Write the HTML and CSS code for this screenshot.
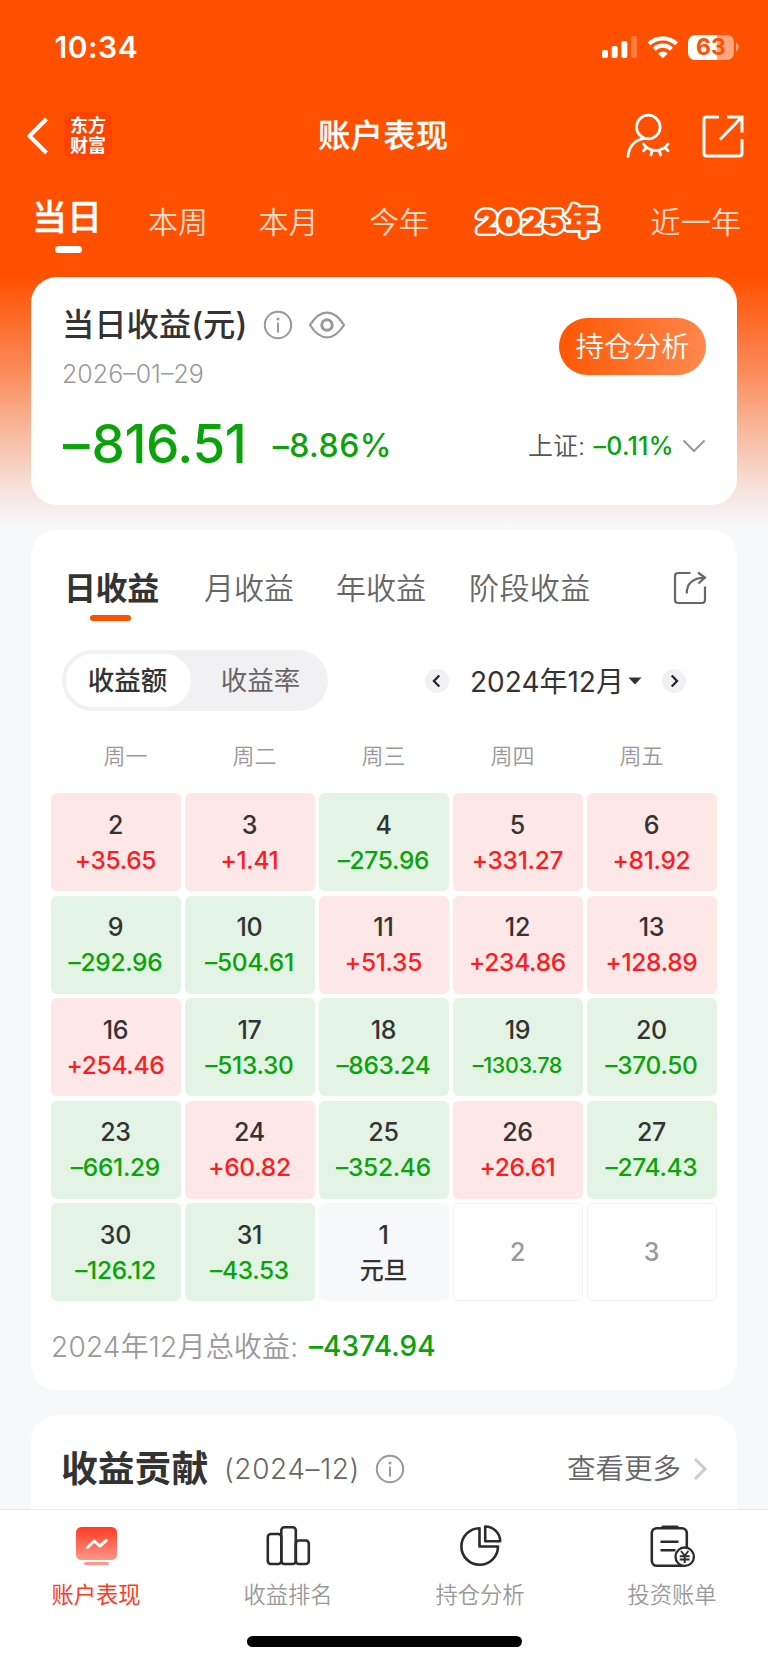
FILE: index.html
```html
<!DOCTYPE html>
<html lang="zh-CN">
<head>
<meta charset="utf-8">
<title>账户表现</title>
<link rel="stylesheet" href="styles.css">
</head>
<body>
<div class="screen">
  <header class="hero">
    <div class="status">
      <span class="clock">10:34</span>
      <div class="status-icons">
        <svg class="signal" width="36" height="24" viewBox="0 0 36 24" fill="#fff"><rect x="0" y="15" width="6" height="8" rx="2"/><rect x="9.7" y="11" width="6" height="12" rx="2"/><rect x="19.3" y="6" width="6" height="17" rx="2"/><rect x="29" y="1" width="6" height="22" rx="2" opacity=".25"/></svg>
        <svg class="wifi" width="32" height="24" viewBox="0 0 32 24" fill="none" stroke="#fff" stroke-width="4.2"><path d="M2 8.8a20 20 0 0 1 27.6 0"/><path d="M7.1 14.2a12.6 12.6 0 0 1 17.4 0"/><path d="M15.8 23.2 10.9 18.4a7.4 7.4 0 0 1 9.8 0z" fill="#fff" stroke="none"/></svg>
        <div class="battery"><span>63</span></div>
        <svg class="nub" width="4" height="10" viewBox="0 0 4 10"><path d="M0 0.5a5.2 5.2 0 0 1 0 9z" fill="#fff" opacity=".5"/></svg>
      </div>
    </div>
    <div class="nav">
      <svg class="back" width="22" height="38" viewBox="0 0 22 38" fill="none" stroke="#fff" stroke-width="4"><path d="M19.5 2 2.5 19l17 17" stroke-linejoin="round"/></svg>
      <div class="logo"><span>东方</span><span>财富</span></div>
      <h1>账户表现</h1>
      <svg class="user" width="44" height="46" viewBox="0 0 44 46" fill="none" stroke="#fff" stroke-width="2.8" stroke-linecap="round"><circle cx="22.3" cy="14" r="11.8"/><path d="M2 43.5C3 31.5 11 25 22.3 25.500"/><path d="M17.5 31c6 8.500 18.500 8.500 24.500 0M20.500 34.500l-3 3.300M26.200 37.500l-1.300 4.500M33.300 37.500l1.300 4.500M39 34.500l3 3.300"/></svg>
      <svg class="export" width="42" height="42" viewBox="0 0 42 42" fill="none" stroke="#fff" stroke-width="3"><path d="M17 2H4.500Q2 2 2 4.500v34Q2 41 4.500 41h33q2.500 0 2.500-2.500V24"/><path d="M25 2h15v15.500M39.500 2.500 18 24.500"/></svg>
    </div>
    <nav class="periods">
      <span class="p1">当日</span><span class="p2">本周</span><span class="p3">本月</span><span class="p4">今年</span><span class="p5">2025<b>年</b></span><span class="p6">近一年</span>
    </nav>
  </header>

  <main>
    <section class="card today">
      <div class="today-main">
        <div class="today-title"><h2>当日收益(元)</h2>
          <svg class="info" width="30" height="30" viewBox="0 0 30 30" fill="none" stroke="#999" stroke-width="2"><circle cx="15" cy="15" r="13.200"/><path d="M15 12.800v9.700"/><circle cx="15" cy="8.900" r="1.500" fill="#999" stroke="none"/></svg>
          <svg class="eye" width="38" height="28" viewBox="0 0 38 28" fill="none" stroke="#999" stroke-width="2.200"><path d="M2 14C7 6 12.500 1.600 19 1.600S31 6 36 14C31 22 25.500 26.400 19 26.400S7 22 2 14z" stroke-linejoin="round"/><circle cx="19" cy="14" r="5.200" stroke-width="3"/></svg>
        </div>
        <div class="date">2026–01–29</div>
      </div>
      <div class="pill-btn">持仓分析</div>
      <div class="figures">
        <span class="big"><i>–</i>816.51</span><span class="pct">–8.86%</span>
        <span class="index-name">上证:</span><span class="index-pct">–0.11%</span>
        <svg class="chev" width="24" height="14" viewBox="0 0 24 14" fill="none" stroke="#999" stroke-width="2"><path d="m1.500 1.500 10.500 10.500 10.500-10.500"/></svg>
      </div>
    </section>

    <section class="card calendar">
      <div class="cal-tabs">
        <span class="t1">日收益</span><span class="t2">月收益</span><span class="t3">年收益</span><span class="t4">阶段收益</span>
        <svg class="share" width="34" height="34" viewBox="0 0 34 34" fill="none" stroke="#666" stroke-width="2.200"><path d="M17.500 2H5Q2 2 2 5v24q0 3 3 3h24q3 0 3-3V15.500"/><path d="M13.700 22.500C13.700 12 20 7 32 6.500M25 1.500l7 5-6.500 6"/></svg>
      </div>
      <div class="cal-controls">
        <div class="segment"><span class="on">收益额</span><span class="off">收益率</span></div>
        <div class="round prev"><svg width="24" height="24" viewBox="0 0 24 24" fill="none" stroke="#222" stroke-width="2.200"><path d="m14.300 6.500-5.400 5.500 5.400 5.500"/></svg></div>
        <span class="month">2024年12月</span>
        <svg class="caret" width="14" height="8" viewBox="0 0 14 8"><path d="M.5.500h13L8 6.500q-1 1-2 0z" fill="#333"/></svg>
        <div class="round next"><svg width="24" height="24" viewBox="0 0 24 24" fill="none" stroke="#222" stroke-width="2.200"><path d="m9.700 6.500 5.400 5.500-5.400 5.500"/></svg></div>
      </div>
      <div class="weekdays"><span>周一</span><span>周二</span><span>周三</span><span>周四</span><span>周五</span></div>
      <div class="grid">
        <div class="cell up"><i>2</i><b>+35.65</b></div><div class="cell up"><i>3</i><b>+1.41</b></div><div class="cell down"><i>4</i><b>–275.96</b></div><div class="cell up"><i>5</i><b>+331.27</b></div><div class="cell up"><i>6</i><b>+81.92</b></div>
        <div class="cell down"><i>9</i><b>–292.96</b></div><div class="cell down"><i>10</i><b>–504.61</b></div><div class="cell up"><i>11</i><b>+51.35</b></div><div class="cell up"><i>12</i><b>+234.86</b></div><div class="cell up"><i>13</i><b>+128.89</b></div>
        <div class="cell up"><i>16</i><b>+254.46</b></div><div class="cell down"><i>17</i><b>–513.30</b></div><div class="cell down"><i>18</i><b>–863.24</b></div><div class="cell down long"><i>19</i><b>–1303.78</b></div><div class="cell down"><i>20</i><b>–370.50</b></div>
        <div class="cell down"><i>23</i><b>–661.29</b></div><div class="cell up"><i>24</i><b>+60.82</b></div><div class="cell down"><i>25</i><b>–352.46</b></div><div class="cell up"><i>26</i><b>+26.61</b></div><div class="cell down"><i>27</i><b>–274.43</b></div>
        <div class="cell down"><i>30</i><b>–126.12</b></div><div class="cell down"><i>31</i><b>–43.53</b></div><div class="cell holiday"><i>1</i><b>元旦</b></div><div class="cell empty"><i>2</i></div><div class="cell empty"><i>3</i></div>
      </div>
      <div class="total"><span class="total-label">2024年12月总收益:</span><span class="total-value">–4374.94</span></div>
    </section>

    <section class="card contrib">
      <h2>收益贡献</h2><span class="range">(2024–12)</span>
      <svg class="info" width="30" height="30" viewBox="0 0 30 30" fill="none" stroke="#999" stroke-width="2"><circle cx="15" cy="15" r="13.200"/><path d="M15 12.800v9.700"/><circle cx="15" cy="8.900" r="1.500" fill="#999" stroke="none"/></svg>
      <span class="more">查看更多</span>
      <svg class="more-chev" width="16" height="24" viewBox="0 0 16 24" fill="none" stroke="#ccc" stroke-width="3"><path d="m3 2 10 10L3 22"/></svg>
    </section>
  </main>

  <footer class="tabbar">
    <div class="tabs">
      <div class="tab active">
        <svg width="48" height="48" viewBox="0 0 48 48"><defs><linearGradient id="g" x1="0" y1="0" x2="0" y2="1"><stop offset="0" stop-color="#ff3b24"/><stop offset="1" stop-color="#ff9688"/></linearGradient></defs><rect x="4" y="5" width="41" height="33" rx="5.500" fill="url(#g)"/><path d="m15.500 25.500 6.800-6.500 5.400 5 6.600-5.500" fill="none" stroke="#fff" stroke-width="3" stroke-linecap="round" stroke-linejoin="round"/><rect x="12" y="40" width="25" height="3" rx="1.500" fill="#ff9688"/></svg>
        <span>账户表现</span>
      </div>
      <div class="tab">
        <svg width="48" height="48" viewBox="0 0 48 48" fill="none" stroke="#2b2b2b" stroke-width="2.600"><rect x="3.800" y="12" width="13.500" height="30" rx="3"/><rect x="17.300" y="5.300" width="14.500" height="36.700" rx="3"/><rect x="31.800" y="18.500" width="13" height="23.500" rx="3"/></svg>
        <span>收益排名</span>
      </div>
      <div class="tab">
        <svg width="48" height="48" viewBox="0 0 48 48" fill="none" stroke="#2b2b2b" stroke-width="2.600" stroke-linejoin="round"><path d="M23.500 6.200A18.300 18.300 0 1 0 42 24.500H23.500z"/><path d="M29.200 4.500V19.200H44.200A15 14.700 0 0 0 29.200 4.500z"/></svg>
        <span>持仓分析</span>
      </div>
      <div class="tab">
        <svg width="48" height="48" viewBox="0 0 48 48" fill="none" stroke="#2b2b2b" stroke-width="2.600"><rect x="3.800" y="6.200" width="35" height="37.600" rx="5"/><path d="M15 5.200h14" stroke-width="3.600" stroke-linecap="round"/><path d="M12.500 19.700h18M12.500 28.300h15"/><circle cx="36.700" cy="34.700" r="9.200" fill="#fff" stroke-width="2.300"/><path d="m33 29 3.700 4.800 3.700-4.800M36.700 34v7M31.800 34.200h9.800M31.800 37.500h9.800" stroke-width="1.900"/></svg>
        <span>投资账单</span>
      </div>
    </div>
    <div class="home"></div>
  </footer>
</div>
</body>
</html>
```
FILE: styles.css
```css
* { box-sizing: border-box; }
body { margin: 0; font-family: "Inter", "Noto Sans CJK SC", sans-serif; color: #333; }
h1, h2 { margin: 0; font-weight: 500; }
i, b { font-style: normal; font-weight: inherit; }
svg { display: block; flex: none; overflow: visible; }
span, h1, h2 { white-space: nowrap; }

.screen {
  width: 768px; height: 1663px; overflow: hidden; display: flex; flex-direction: column;
  background: linear-gradient(180deg, #ff5000 0, #ff5000 276px, #fb8a58 370px, #f8b79b 430px, #f6e3dd 490px, #f7f8fa 526px);
}
.hero { height: 276.500px; flex: none; color: #fff; }

.status { height: 94px; padding: 0 29px 0 54.500px; display: flex; align-items: center; justify-content: space-between; }
.clock { font-size: 30px; font-weight: 600; letter-spacing: .5px; }
.status-icons { display: flex; align-items: center; }
.wifi { margin-left: 9px; }
.battery {
  width: 46px; height: 25px; margin-left: 9px; border-radius: 7px; text-align: center;
  background: linear-gradient(90deg, #fff 63%, rgba(255,255,255,.5) 63%);
  color: #ff5000; font-size: 23px; font-weight: 700; line-height: 25px;
}
.nub { margin-left: 2px; margin-right: -1px; }

.nav { height: 84px; display: flex; align-items: center; padding-left: 27px; }
.logo {
  width: 48px; height: 48px; margin-left: 15px; border-radius: 9px; background: #ff4400;
  display: flex; flex-direction: column; align-items: center; justify-content: center;
  font-size: 18px; font-weight: 700; line-height: 20px;
}
.nav h1 { margin-left: 206px; width: 130px; font-size: 32.300px; line-height: 44px; letter-spacing: .3px; -webkit-text-stroke: .3px #fff; }
.user { margin: 0 0 0 178px; }
.export { margin-left: 32px; }

.periods { display: flex; align-items: center; height: 87px; padding-left: 32px; font-size: 30px; font-weight: 350; color: rgba(255,255,255,.8); line-height: 44px; }
.periods .p1 { position: relative; width: 69px; margin-right: 47px; font-size: 35px; font-weight: 500; color: #fff; top: -5px; -webkit-text-stroke: .4px #fff; }
.p1::after { content: ""; position: absolute; left: 23px; top: 51px; width: 27px; height: 7px; border-radius: 4px; background: #fff; }
.p2, .p3, .p4 { width: 110.500px; }
.p5 {
  width: 174px; margin-left: -3px; font-size: 32px; font-weight: 900; color: #ff5000; letter-spacing: .6px;
  -webkit-text-stroke: 1px #ff5000;
  text-shadow: 3px 0 #fff, -3px 0 #fff, 0 3px #fff, 0 -3px #fff, 2.100px 2.100px #fff, -2.100px 2.100px #fff, 2.100px -2.100px #fff, -2.100px -2.100px #fff, 2.800px 1.100px #fff, -2.800px 1.100px #fff, 2.800px -1.100px #fff, -2.800px -1.100px #fff;
}
.p5 b { margin-left: 1px; font-size: 33px; -webkit-text-stroke-width: .8px; }
.p6 { letter-spacing: .3px; }

main { flex: 1; min-height: 0; overflow: hidden; display: flex; flex-direction: column; gap: 25px; padding: 0 31px; }
.card { flex: none; background: #fff; border-radius: 26px; }

.today { height: 228.500px; display: grid; grid-template-columns: 1fr auto; grid-template-rows: 115px 1fr; padding: 0 31px 0 31px; }
.today-title { display: flex; align-items: center; padding-top: 24px; }
.today-title h2 { font-size: 32.300px; line-height: 48px; width: 184px; }
.today-title .info { margin-left: 17px; }
.eye { margin-left: 15px; }
.date { font-size: 25px; line-height: 30px; font-weight: 350; color: #999; margin-top: 10px; }
.pill-btn { margin-top: 41px; width: 147px; height: 57px; border-radius: 29px; color: #fff; font-size: 28.500px; line-height: 58px; text-align: center; font-weight: 350; background: linear-gradient(100deg, #ff5500, #ff8a50); }
.figures { grid-column: 1 / 3; display: flex; align-items: center; height: 104px; color: #0aa30a; font-weight: 500; }
.big { font-size: 53px; width: 212px; letter-spacing: -.4px; padding-left: 1px; }
.big i { letter-spacing: 2px; }
.pct { font-size: 32px; width: 257px; padding-top: 3px; letter-spacing: .5px; }
.index-name { font-size: 25px; font-weight: 350; color: #555; width: 66px; padding-top: 1px; }
.index-pct { font-size: 25px; width: 89px; padding-top: 5px; letter-spacing: .2px; }
.chev { margin-top: 4px; }

.calendar { height: 860px; }
.cal-tabs { display: flex; align-items: center; height: 116px; padding-left: 33px; font-size: 30px; color: #666; font-weight: 350; }
.cal-tabs span { margin-top: -5px; }
.t1 { position: relative; width: 140px; font-size: 32px; font-weight: 700; color: #333; letter-spacing: -.4px; }
.t1::after { content: ""; position: absolute; left: 26px; bottom: -12px; width: 41px; height: 6px; border-radius: 3px; background: #ff5000; }
.t2 { width: 132px; } .t3 { width: 133px; } .t4 { width: 204px; letter-spacing: .4px; }

.cal-controls { display: flex; align-items: center; height: 69px; padding-left: 31px; }
.segment { width: 266px; height: 61px; border-radius: 31px; background: #f1f1f4; display: flex; padding: 4px; font-size: 26.500px; line-height: 52px; text-align: center; }
.on { width: 125px; border-radius: 27px; background: #fff; font-weight: 500; padding-right: 2px; }
.off { flex: 1; color: #666; padding-left: 6px; }
.round { width: 24px; height: 24px; border-radius: 50%; background: #f1f1f4; }
.prev { margin-left: 97px; }
.month { margin: -2px 0 0 21px; width: 150px; font-size: 28px; }
.caret { margin-left: 7.500px; }
.next { margin-left: 20.500px; }

.weekdays { display: flex; height: 78px; padding: 0 0 1px 30px; align-items: center; font-size: 22px; color: #999; font-weight: 350; }
.weekdays span { width: 129px; text-align: center; }
.grid { display: grid; grid-template-columns: repeat(5, 129.500px); grid-auto-rows: 98px; gap: 4.500px; padding-left: 20.200px; }
.cell { border-radius: 6px; display: flex; flex-direction: column; align-items: center; padding: 13.500px 1px 0 0; font-size: 25px; line-height: 36px; font-weight: 500; letter-spacing: -.3px; }
.cell i { display: block; }
.cell b { font-size: 24.500px; line-height: 35px; }
.up { background: #fee7e7; } .up b { color: #fb1d22; }
.down { background: #e3f4e4; } .down b { color: #0aa30a; }
.cell.long b { font-size: 21.500px; }
.holiday { background: #f7f8fa; }
.cell.holiday b { font-size: 24px; }
.empty { border: 1px solid #f2f2f3; padding-top: 30px; color: #999; }
.total { display: flex; align-items: center; height: 88px; padding-left: 20px; font-size: 28px; }
.total-label { width: 258px; color: #999; font-weight: 350; letter-spacing: .2px; }
.total-value { color: #0aa30a; font-weight: 500; padding-top: 2px; letter-spacing: .1px; }

.contrib { height: 160px; display: flex; align-items: flex-start; padding: 27px 0 0 30px; line-height: 54px; }
.contrib h2 { width: 163px; font-size: 36.800px; font-weight: 700; }
.range { width: 136px; font-size: 28px; color: #666; font-weight: 350; letter-spacing: .6px; }
.contrib .info { margin: 12px 0 0 15px; }
.more { margin-left: 162px; width: 125px; font-size: 28.500px; color: #666; font-weight: 350; }
.more-chev { margin-top: 15px; }

.tabbar { height: 154px; flex: none; background: #fff; border-top: 1px solid #e8e8ea; }
.tabs { display: flex; height: 126px; }
.tab { width: 192px; display: flex; flex-direction: column; align-items: center; padding-top: 12px; font-size: 22.300px; color: #999; font-weight: 350; }
.tab span { line-height: 34px; margin-top: 8px; }
.active { color: #ff3b24; }
.active span { font-weight: 400; }
.home { width: 275px; height: 10.500px; border-radius: 6px; background: #000; margin: 0 auto; }
```
